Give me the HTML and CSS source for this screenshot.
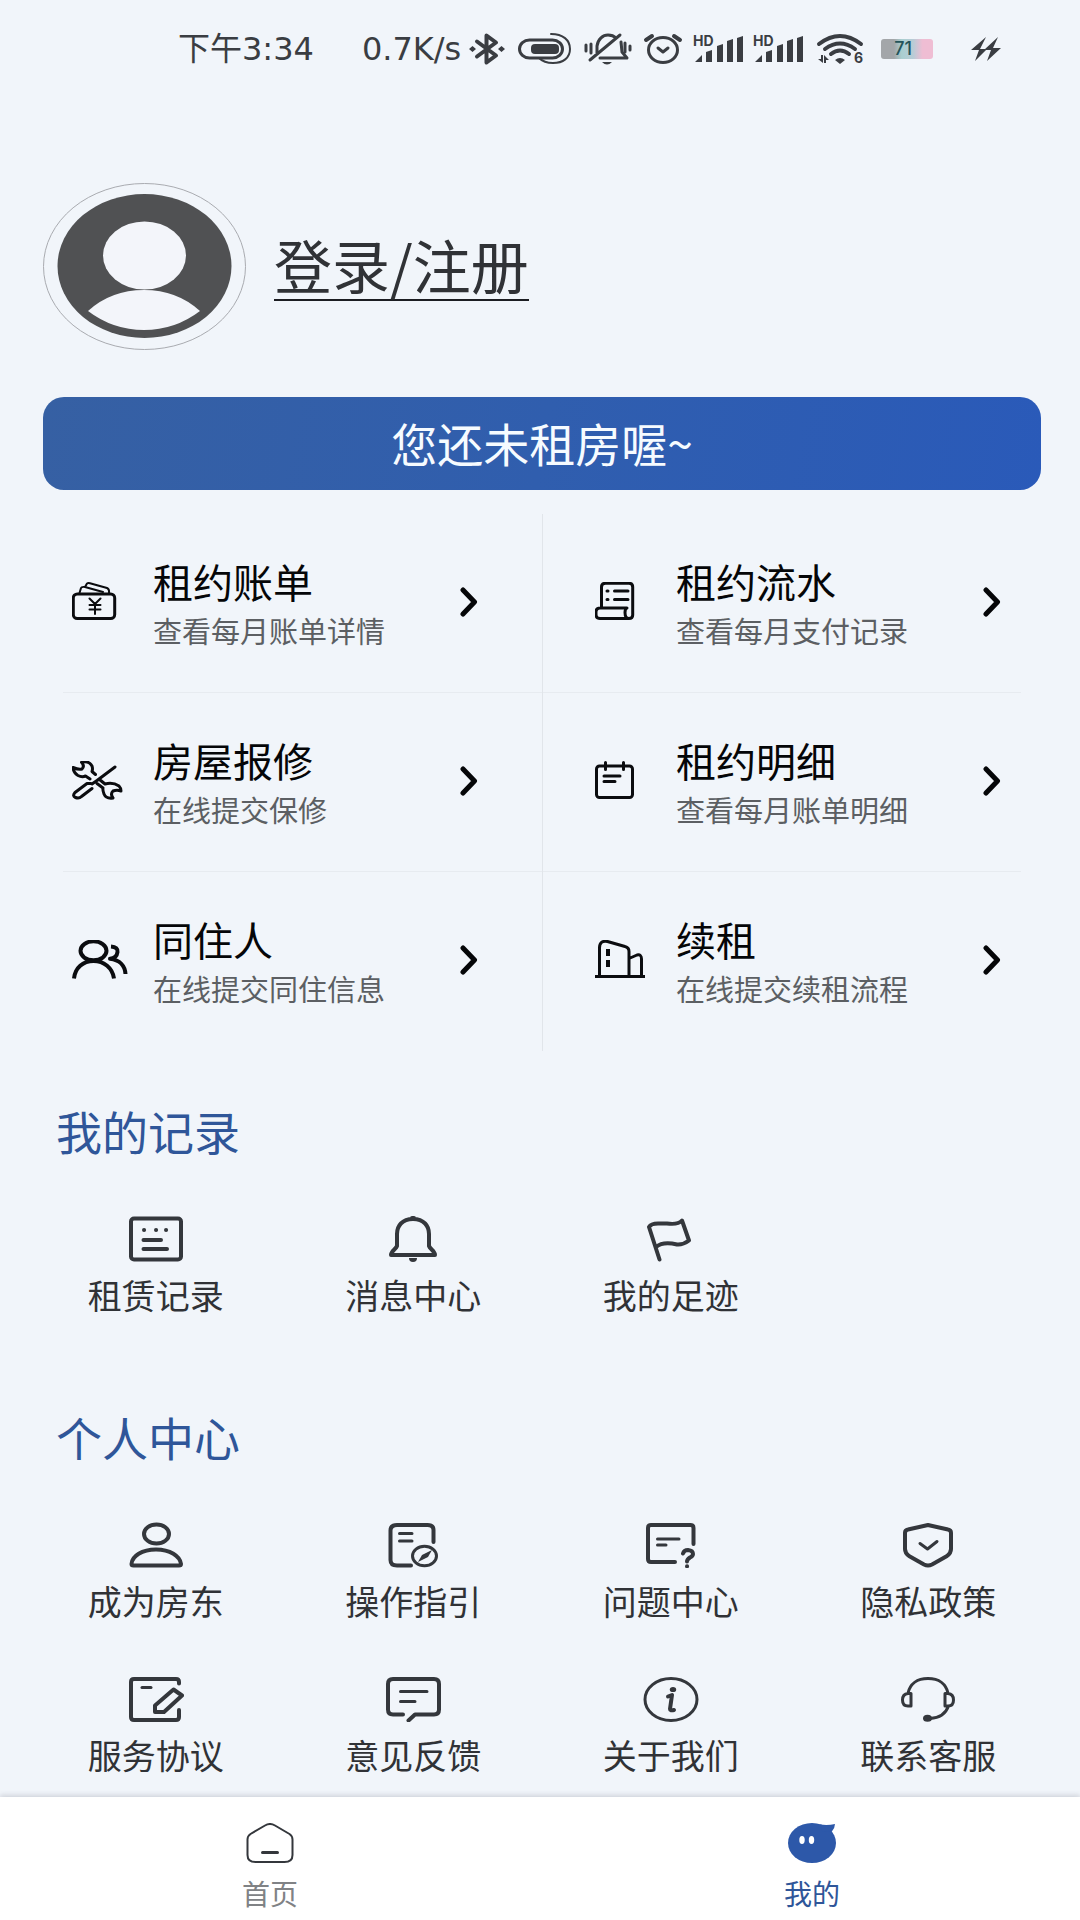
FILE: index.html
```html
<!DOCTYPE html>
<html lang="zh-CN">
<head>
<meta charset="utf-8">
<meta name="viewport" content="width=device-width, initial-scale=1">
<title>我的</title>
<link rel="stylesheet" href="styles.css">
</head>
<body>
<div class="page">
  <header class="status">
    <span class="status-time">下午3:34</span>
    <span class="status-speed">0.7K/s</span>
    <div class="status-icons">
      <svg class="solid" width="37" height="32" viewBox="0 0 37 32" aria-hidden="true"><path class="line w4" d="M8 8.500 27 22.500 17.500 29.500V2.500L27 9.500 8 23.500"/><path d="M0 16l3.500-3 3.500 3-3.500 3zM29 16l3.500-3 3.500 3-3.500 3z"/></svg>
      <svg class="solid" width="55" height="32" viewBox="0 0 55 32" aria-hidden="true"><rect class="line w3" x="1.500" y="7" width="43" height="18" rx="10"/><rect x="13" y="11" width="28" height="10" rx="4"/><path class="line w2" d="M33 1c12 0 19 6 19 15s-7 14-17 14c-6 0-11-2-14-5"/></svg>
      <svg class="solid" width="47" height="32" viewBox="0 0 47 32" aria-hidden="true"><path class="line w3" d="M12 21V13C13 6 18 2 23 2c4 0 6 1 8 3M5 27 35 2M36 9l1 10 5 6H15"/><path class="line w3" d="M1 12v6M6 11v9M40 10v9M45 13v4"/><path d="M17 29h10q-5 5-10 0z"/></svg>
      <svg class="solid" width="38" height="32" viewBox="0 0 38 32" aria-hidden="true"><ellipse class="line w3" cx="19" cy="17" rx="14.500" ry="12.500"/><path class="line w4" d="M2 7 8 3M30 3l6 4"/><path class="line w3" d="M14 15l5 4 5-4"/></svg>
      <svg class="solid" width="48" height="32" viewBox="0 0 48 32" aria-hidden="true"><text class="tiny" x="-1" y="13">HD</text><path d="M1 29l7-7v7zM12 29V19l6-2v12zM23 29V13l6-2v18zM33 29V8l6-2v23zM43 29V5l6-2v26z"/></svg>
      <svg class="solid" width="51" height="32" viewBox="0 0 51 32" aria-hidden="true"><text class="tiny" x="-1" y="13">HD</text><path d="M1 29l7-7v7zM12 29V19l6-2v12zM23 29V13l6-2v18zM33 29V8l6-2v23zM43 29V5l6-2v26z"/></svg>
      <svg class="solid" width="46" height="32" viewBox="0 0 46 32" aria-hidden="true"><path class="line w4" d="M2 11q21-16 42 0M8 16q15-11 30 0M14 21q9-7 18 0"/><path d="M18 27q5-4 10 0l-5 4zM1 26h3v-4h2v8zM7 30v-8l5 5H9v3z"/><text class="tiny" x="37" y="30">6</text></svg>
      <span class="battery">71</span>
      <svg class="solid bolt" width="30" height="26" viewBox="0 0 30 26" aria-hidden="true"><path d="M15 1 0 14h8L4 25l12-12H9zM27 1 13 14h7l-4 11 14-13h-8z"/></svg>
    </div>
  </header>

  <main class="content">
    <section class="profile">
      <svg class="avatar" width="203" height="167" viewBox="0 0 203 167" aria-hidden="true"><ellipse class="ring" cx="101.500" cy="83.500" rx="101" ry="83"/><ellipse class="disc" cx="101.500" cy="83" rx="87" ry="72"/><ellipse class="skin" cx="101.500" cy="72.500" rx="41.500" ry="34"/><path class="skin" d="M45 128Q68 107 101 107t56 21Q132 147 101 147T45 128z"/></svg>
      <a class="login" href="#login">登录/注册</a>
    </section>

    <button class="banner" type="button">您还未租房喔~</button>

    <nav class="menu">
      <div class="menu-row">
        <a class="menu-item" href="#bill">
          <svg class="menu-icon" viewBox="0 0 56 40" aria-hidden="true"><rect x="1.300" y="12" width="41.400" height="24.500" rx="4"/><path class="w2" d="M7.500 11 9 6Q9.500 4.500 13 5M13 5l2-3.500Q16 .8 18 1.300L35 6q2.500 1 2 5M13 5L31 10M17.500 16.500 23 22l5.500-5.500M17.500 23h11M17.500 27.500h11M23 22v10"/></svg>
          <span class="menu-text"><span class="menu-title">租约账单</span><span class="menu-sub">查看每月账单详情</span></span>
          <svg class="arrow" viewBox="0 0 18 30" aria-hidden="true"><path d="M3 3 14.500 15 3 27"/></svg>
        </a>
        <a class="menu-item" href="#flow">
          <svg class="menu-icon" viewBox="0 0 56 40" aria-hidden="true"><path d="M6.500 25V5q0-3.700 4-3.700H34q3.700 0 3.700 3.700V33q0 3.500-3.700 3.500H5q-4 0-4-4V30q0-4 4-4H32q-2 1-2 4.500 0 6 4 6"/><path d="M12 9h1M12 17.500h1M19.500 9H33M19.500 17.500H33"/></svg>
          <span class="menu-text"><span class="menu-title">租约流水</span><span class="menu-sub">查看每月支付记录</span></span>
          <svg class="arrow" viewBox="0 0 18 30" aria-hidden="true"><path d="M3 3 14.500 15 3 27"/></svg>
        </a>
      </div>
      <div class="menu-row">
        <a class="menu-item" href="#repair">
          <svg class="menu-icon" viewBox="0 0 56 40" aria-hidden="true"><path d="M18 18l-4.500-3Q10 16.500 6 14.500 1.500 12 1 6.500 7 9 10 8 13 5 9.500 1.300 17-.5 20 5q1 3 0 5.500l3.500 3M43 6 25 19.500 20 23M19 22.500h-4L3 31.500Q0 35 3.500 36.500 7 38 9.500 35.500L20 27.500M27.500 18.500 33 23q8-2 14 2 2 2 2 5-4-1.500-8 0-3 3 0 7-7 1-9-4-1.500-4-1-6l-6-4.500"/></svg>
          <span class="menu-text"><span class="menu-title">房屋报修</span><span class="menu-sub">在线提交保修</span></span>
          <svg class="arrow" viewBox="0 0 18 30" aria-hidden="true"><path d="M3 3 14.500 15 3 27"/></svg>
        </a>
        <a class="menu-item" href="#detail">
          <svg class="menu-icon" viewBox="0 0 56 40" aria-hidden="true"><rect x="1.500" y="5" width="36" height="31.500" rx="3"/><path d="M10.500 1.500v7M28.500 1.500v7M9 15h16M9 20.500h11"/></svg>
          <span class="menu-text"><span class="menu-title">租约明细</span><span class="menu-sub">查看每月账单明细</span></span>
          <svg class="arrow" viewBox="0 0 18 30" aria-hidden="true"><path d="M3 3 14.500 15 3 27"/></svg>
        </a>
      </div>
      <div class="menu-row">
        <a class="menu-item" href="#roommate">
          <svg class="menu-icon butt" viewBox="0 0 56 40" aria-hidden="true"><g class="w4"><ellipse cx="21.500" cy="10.800" rx="13" ry="9.500"/><path d="M2 38.500C3 28 11 21 21.500 21S40.500 28 42 38.500M39 6.500c5 .3 7 2.500 6.500 5.500-.5 4-3.500 6.500-7.500 6.800C48 20 53 26 53.500 34"/></g></svg>
          <span class="menu-text"><span class="menu-title">同住人</span><span class="menu-sub">在线提交同住信息</span></span>
          <svg class="arrow" viewBox="0 0 18 30" aria-hidden="true"><path d="M3 3 14.500 15 3 27"/></svg>
        </a>
        <a class="menu-item" href="#renew">
          <svg class="menu-icon butt" viewBox="0 0 56 40" aria-hidden="true"><path d="M0 36.500h50M4.500 36V8q0-8 8-6.500L30 6.500q4 1 4 5V36M34 18.500l8-3.500q4.500-1 4.500 4V36"/><path class="w4" d="M13 9v7M13 20v7"/></svg>
          <span class="menu-text"><span class="menu-title">续租</span><span class="menu-sub">在线提交续租流程</span></span>
          <svg class="arrow" viewBox="0 0 18 30" aria-hidden="true"><path d="M3 3 14.500 15 3 27"/></svg>
        </a>
      </div>
    </nav>
  </main>

  <section class="group">
    <h2 class="group-title">我的记录</h2>
    <div class="tiles">
      <a class="tile" href="#rent"><svg class="tile-icon" viewBox="0 0 56 46" aria-hidden="true"><rect x="3" y="2.500" width="50" height="41" rx="3"/><path d="M16 14h.1M28 14h.1M38 14h.1M15.500 24H33M15.500 33H39"/></svg>租赁记录</a>
      <a class="tile" href="#message"><svg class="tile-icon" viewBox="0 0 56 46" aria-hidden="true"><path d="M28 3C17 3 12 10 12 18V30C11 33 6 35 6 39H50C50 35 45 33 44 30V18C44 10 39 3 28 3zM27 2h2"/><path class="fill" d="M24 42h8q0 4-4 4t-4-4z"/></svg>消息中心</a>
      <a class="tile" href="#footprint"><svg class="tile-icon" viewBox="0 0 56 46" aria-hidden="true"><path d="M16.500 43.500 6 11Q8 7.500 15 7.500H24Q35 9 39 4.500L46 24.500Q40 29 34 28.500 20 25 13 31"/></svg>我的足迹</a>
    </div>
  </section>

  <section class="group">
    <h2 class="group-title">个人中心</h2>
    <div class="tiles">
      <a class="tile" href="#landlord"><svg class="tile-icon" viewBox="0 0 56 46" aria-hidden="true"><ellipse cx="28.500" cy="12" rx="12.500" ry="9.500"/><path d="M3.500 42C4 34 14 27.500 28 27.500S52 34 53 42q0 1.500-2 1.500H5.500Q3.500 43.500 3.500 42z"/></svg>成为房东</a>
      <a class="tile" href="#guide"><svg class="tile-icon" viewBox="0 0 56 46" aria-hidden="true"><path d="M48.500 20V8q0-5-6-5H12Q5.500 3 5.500 8.500V38q0 5.500 6.500 5.500H26"/><path class="w3" d="M14.500 11.500H27M14.500 19H27"/><ellipse class="w3" cx="39.500" cy="34" rx="12" ry="9.800"/><path class="fill" d="M33 40l4-7 10-5-4 7z"/></svg>操作指引</a>
      <a class="tile" href="#faq"><svg class="tile-icon" viewBox="0 0 56 46" aria-hidden="true"><path d="M50.500 22V6q0-3-3-3H8Q5 3 5 6V37q0 3 3 3H32"/><path class="w3" d="M14.500 17H36M14.500 23H23"/><path d="M40 31.500q1-3.500 5-3.500 5 .5 5 4 0 2-3 3.500-3 2-3 4M44 44.200h.1"/></svg>问题中心</a>
      <a class="tile" href="#privacy"><svg class="tile-icon" viewBox="0 0 56 46" aria-hidden="true"><path d="M28 3 8 7.500Q5 8 5 11V27Q5 31 9 34L24 42.500q4 2 8 0L47 34q4-3 4-7V11q0-3-3-3.500z"/><path class="w3" d="M20 21.500l7.500 5.500L37 19.500"/></svg>隐私政策</a>
      <a class="tile" href="#terms"><svg class="tile-icon" viewBox="0 0 56 46" aria-hidden="true"><path d="M51 7.500V6q0-3-3-3H6Q3 3 3 6V41q0 3 3 3H48q3 0 3-3V34M45.500 13.500l8.500 6L36 36H27V29.500z"/><path class="w3" d="M14 11.500h9"/></svg>服务协议</a>
      <a class="tile" href="#feedback"><svg class="tile-icon" viewBox="0 0 56 46" aria-hidden="true"><path d="M18 38.500H8q-5 0-5-5V8Q3 3 8 3H49q5 0 5 5V33.500q0 5-5 5H30L23.500 44.500"/><path class="w3" d="M15.500 15.500H42M15.500 25.500H30"/></svg>意见反馈</a>
      <a class="tile" href="#about"><svg class="tile-icon" viewBox="0 0 56 46" aria-hidden="true"><ellipse class="w3" cx="28" cy="23.500" rx="26" ry="21"/><path d="M25 20.500l4-1.500-2 14q0 2 4 1"/><ellipse class="fill" cx="30" cy="13.500" rx="3.200" ry="2.600"/></svg>关于我们</a>
      <a class="tile" href="#service"><svg class="tile-icon" viewBox="0 0 56 46" aria-hidden="true"><path class="w3" d="M8 17C10 8 17 2.500 28 2.500S46 8 48 17M11 17.500V30H8Q2.500 30 2.500 24T8 17.500zM45 17.500V30H48Q53.500 30 53.500 24T48 17.500zM48.500 30C46 37 40 42 30 42.500"/><ellipse class="fill" cx="27.500" cy="42.300" rx="4.500" ry="3.500"/></svg>联系客服</a>
    </div>
  </section>

  <nav class="tabbar">
    <a class="tab" href="#home"><svg class="tab-icon" viewBox="0 0 48 40" aria-hidden="true"><path d="M19 2.500q5-3 10 0l14.500 8.500q3 2 3 5.500V32q0 7-8 7H9.500q-8 0-8-7V16.500q0-3.500 3-5.500z"/><path class="w3" d="M16.500 29.500h15"/></svg>首页</a>
    <a class="tab tab-on" href="#mine"><svg class="tab-icon" viewBox="0 0 48 40" aria-hidden="true"><ellipse class="body" cx="24" cy="20" rx="24" ry="20"/><path class="body" d="M32 1.500Q40 2.500 47 1 47 5 43.500 9L34 8z"/><ellipse class="eye" cx="14" cy="17" rx="2.700" ry="4"/><ellipse class="eye" cx="23.500" cy="17" rx="2.700" ry="4"/></svg>我的</a>
  </nav>
</div>
</body>
</html>
```
FILE: styles.css
```css
* {
  box-sizing: border-box;
}

body {
  margin: 0;
  background: #f1f5fa;
  color: #303236;
  font-family: "Noto Sans CJK SC", sans-serif;
  font-weight: 400;
}

a {
  color: inherit;
  text-decoration: none;
}

.page {
  display: flex;
  flex-direction: column;
  min-height: 100vh;
}

/* Status bar */
.status {
  display: flex;
  align-items: center;
  height: 98px;
  padding-left: 178px;
  color: #3a3d42;
  font-family: "DejaVu Sans", "Noto Sans CJK SC", sans-serif;
  font-size: 32px;
  line-height: 40px;
  white-space: nowrap;
}

.status-speed {
  margin-left: 48px;
}

.status-icons {
  display: flex;
  align-items: center;
  gap: 12px;
  margin-left: 8px;
}

.status-icons svg {
  flex: none;
  overflow: visible;
}

.solid {
  fill: #3a3d42;
}

.line {
  fill: none;
  stroke: #3a3d42;
  stroke-linecap: round;
  stroke-linejoin: round;
}

.tiny {
  font: 700 14px Inter, sans-serif;
}

.w2 {
  stroke-width: 2px;
}

.w3 {
  stroke-width: 3px;
}

.w4 {
  stroke-width: 4px;
}

.battery {
  width: 52px;
  height: 20px;
  margin-left: 6px;
  padding-left: 13px;
  border-radius: 3px;
  background: linear-gradient(90deg, #a3a6a9 25%, #a9cfd0 40%, #b9ccd6 62%, #efbdd3 80%);
  color: #24545a;
  font: 500 18px/20px Inter, sans-serif;
}

.bolt {
  margin-left: 26px;
}

/* Profile and banner */
.content {
  padding: 85px 39px 0 43px;
}

.profile {
  display: flex;
  align-items: center;
  gap: 28px;
}

.avatar {
  flex: none;
}

.ring {
  fill: none;
  stroke: #a9abb0;
}

.disc {
  fill: #505153;
}

.skin {
  fill: #f3f5fa;
}

.login {
  padding-bottom: 4px;
  border-bottom: 2px solid #1c1d22;
  font-size: 58px;
  line-height: 62px;
}

.banner {
  display: block;
  width: 100%;
  height: 93px;
  margin-top: 47px;
  padding: 0 0 4px;
  border: 0;
  border-radius: 21px;
  background: linear-gradient(100deg, #3660a3, #305eae 50%, #2a5ab9);
  color: #f6fbff;
  font: inherit;
  font-size: 46px;
  line-height: 88px;
}

/* Lease menu */
.menu {
  position: relative;
  margin-top: 24px;
}

.menu::after {
  content: "";
  position: absolute;
  top: 0;
  bottom: 0;
  left: 50%;
  width: 1px;
  background: #e1e5ea;
}

.menu-row {
  display: grid;
  grid-template-columns: 1fr 1fr;
  gap: 48px;
  height: 179px;
  background: linear-gradient(#e7ebf0, #e7ebf0) center bottom / calc(100% - 40px) 1px no-repeat;
}

.menu-row:last-child {
  background: none;
}

.menu-item {
  display: flex;
  align-items: center;
  padding: 0 40px 3px 29px;
}

.menu-icon {
  flex: none;
  width: 56px;
  height: 40px;
  margin-right: 25px;
  fill: none;
  stroke: #0b0c0f;
  stroke-width: 3px;
  stroke-linecap: round;
  stroke-linejoin: round;
}

.butt {
  stroke-linecap: butt;
}

.menu-text {
  flex: 1;
  padding-bottom: 3px;
}

.menu-title,
.menu-sub {
  display: block;
  white-space: nowrap;
}

.menu-title {
  color: #050608;
  font-size: 40px;
  line-height: 58px;
}

.menu-sub {
  color: #5c5f63;
  font-size: 29px;
  line-height: 40px;
}

.arrow {
  flex: none;
  width: 18px;
  height: 30px;
  fill: none;
  stroke: #050608;
  stroke-width: 5px;
  stroke-linecap: round;
  stroke-linejoin: round;
}

/* Shortcut groups */
.group {
  padding: 49px 23px 40px 27px;
}

.group-title {
  margin: 0 0 56px 29px;
  color: #2f5699;
  font-size: 46px;
  font-weight: 400;
  line-height: 60px;
}

.tiles {
  display: grid;
  grid-template-columns: repeat(4, 1fr);
  row-gap: 53px;
}

.tile {
  display: flex;
  flex-direction: column;
  align-items: center;
  gap: 11px;
  font-size: 34px;
  line-height: 44px;
}

.tile-icon {
  width: 56px;
  height: 46px;
  fill: none;
  stroke: #34373c;
  stroke-width: 4px;
  stroke-linecap: round;
  stroke-linejoin: round;
}

.tile-icon .fill {
  fill: #34373c;
  stroke: none;
}

.group:nth-last-child(2) {
  padding-bottom: 18px;
}

/* Bottom tabs */
.tabbar {
  display: grid;
  grid-template-columns: 1fr 1fr;
  gap: 6px;
  margin-top: auto;
  padding-left: 2px;
  background: #fff;
  box-shadow: 0 -2px 5px rgba(60, 60, 75, 0.18);
}

.tab {
  display: flex;
  flex-direction: column;
  align-items: center;
  gap: 12px;
  padding: 26px 0 9px;
  color: #808285;
  font-size: 28px;
  line-height: 36px;
}

.tab-on {
  color: #2f5699;
}

.tab-icon {
  width: 48px;
  height: 40px;
  fill: none;
  stroke: #34373c;
  stroke-width: 2px;
  stroke-linecap: round;
  stroke-linejoin: round;
}

.tab-icon .body {
  fill: #2d58a9;
  stroke: none;
}

.tab-icon .eye {
  fill: #fff;
  stroke: none;
}
```
